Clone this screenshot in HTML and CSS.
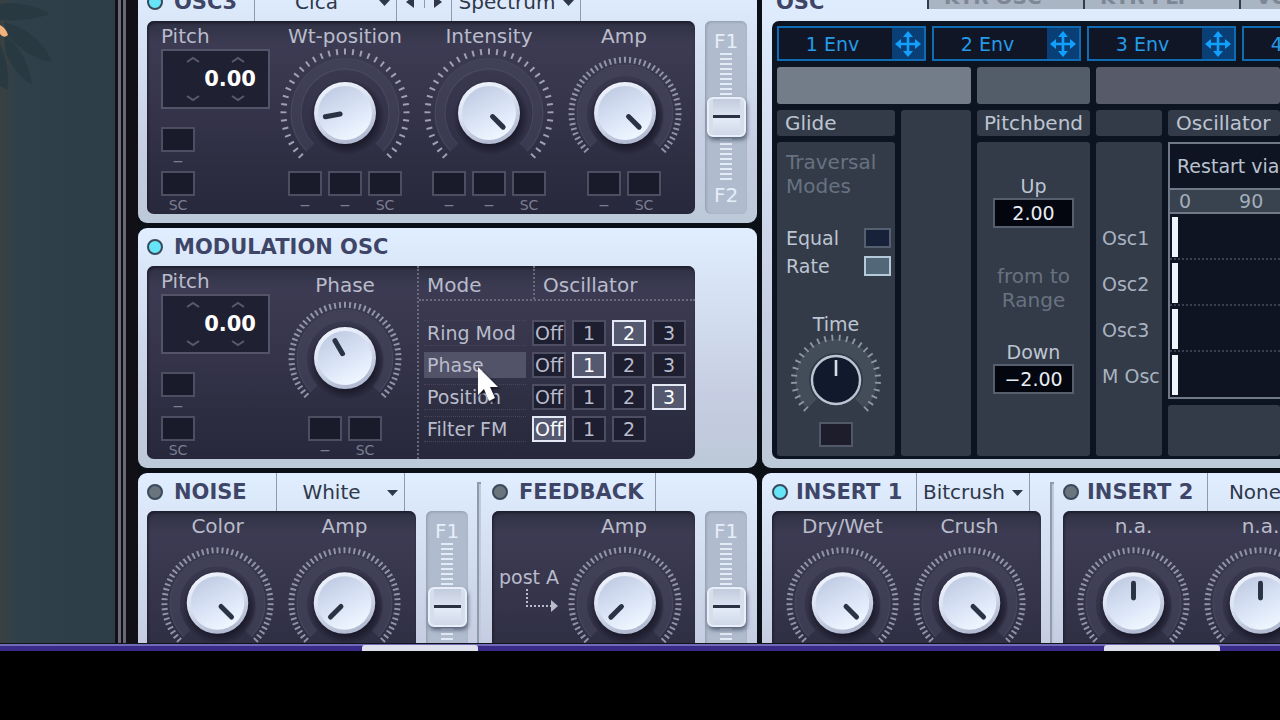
FILE: index.html
```html
<!DOCTYPE html>
<html lang="en">
<head>
<meta charset="utf-8">
<title>Synth</title>
<link rel="stylesheet" href="styles.css">
</head>
<body>
<svg class="defs" aria-hidden="true">
  <defs>
    <linearGradient id="rim" x1="0" y1="0" x2="0.4" y2="1"><stop offset="0" stop-color="#f4f8ff"/><stop offset="0.5" stop-color="#dbe2f2"/><stop offset="1" stop-color="#b3bcd2"/></linearGradient>
    <linearGradient id="dish" x1="0.1" y1="0" x2="0.6" y2="1"><stop offset="0" stop-color="#bcc8e0"/><stop offset="0.5" stop-color="#d6e0f4"/><stop offset="1" stop-color="#eef6ff"/></linearGradient>
    <radialGradient id="shade"><stop offset="0.7" stop-color="#10101e" stop-opacity="0.75"/><stop offset="1" stop-color="#10101e" stop-opacity="0"/></radialGradient>
    <g id="cap">
      <circle cx="2" cy="4" r="38" fill="url(#shade)"/>
      <circle r="31" fill="url(#rim)"/>
      <circle r="27" fill="url(#dish)"/>
    </g>
    <g id="dial-large" fill="none">
      <path d="M-35 35A49 49 0 1 1 35 35" stroke="#4b4b62" stroke-opacity="0.4" stroke-width="11"/>
      <path d="M-31 31A44 44 0 1 1 31 31" stroke="#5a5a72" stroke-opacity="0.4" stroke-width="1"/>
      <path d="M-38 38A54 54 0 1 1 38 38" stroke="#5a5a72" stroke-opacity="0.4" stroke-width="1"/>
      <path d="M-43.5 43.5A61.5 61.5 0 1 1 43.5 43.5" pathLength="145" stroke="#9fa1b3" stroke-width="6" stroke-dasharray="1 3"/>
    </g>
    <g id="dial-small" fill="none">
      <path d="M-31 31A43 43 0 1 1 31 31" stroke="#4b4b62" stroke-opacity="0.45" stroke-width="10"/>
      <path d="M-34 34A48 48 0 1 1 34 34" stroke="#5a5a72" stroke-opacity="0.4" stroke-width="1"/>
      <path d="M-38 38A53.5 53.5 0 1 1 38 38" pathLength="126" stroke="#9193a6" stroke-width="6" stroke-dasharray="1 1.5"/>
    </g>
    <path id="down" d="M0 0h11l-5.5 6z"/>
    <g id="move" fill="none" stroke="#12a0ff" stroke-width="2.6">
      <path d="M-9 0H9M0-9V9"/>
      <path d="M0-13L5-7H-5ZM0 13L5 7H-5ZM-13 0L-7-5V5ZM13 0L7-5V5Z" fill="#12a0ff" stroke="none"/>
    </g>
  </defs>
</svg>

<main class="workspace">
  <aside class="desk">
    <svg class="leaf" viewBox="0 0 60 110" aria-hidden="true">
      <g fill="#293942"><path d="M0 4Q24 0 50 14Q26 22 0 20Z"/><path d="M4 22Q38 30 52 62Q30 60 6 34Z"/><path d="M4 34Q28 54 32 84Q18 78 6 54Z"/><path d="M0 44Q10 64 8 90L0 86Z"/></g>
      <path d="M0 25Q6 28 8 35Q4 39 0 34Z" fill="#f3b27b"/>
    </svg>
  </aside>
  <div class="rails"><i></i><i></i></div>

  <div class="synth">
    <section class="panel">
      <div class="module">
        <header class="head">
          <div class="title w-osc"><i class="led on"></i><h2>OSC3</h2></div>
          <div class="pick w-wave"><select aria-label="Wavetable"><option>Cica</option></select><svg viewBox="0 0 11 6"><use href="#down"/></svg></div>
          <div class="stepper"><button aria-label="Previous"><svg viewBox="0 0 8 12"><path d="M8 0v12L0 6z"/></svg></button><button aria-label="Next"><svg viewBox="0 0 8 12"><path d="M0 0v12l8-6z"/></svg></button></div>
          <div class="pick w-type"><select aria-label="Type"><option>Spectrum</option></select><svg viewBox="0 0 11 6"><use href="#down"/></svg></div>
        </header>
        <div class="body">
          <div class="display strip">
            <div class="pitch">
              <label for="pitch3">Pitch</label>
              <div class="pitch-box">
                <div class="carets"><button aria-label="Up"><svg viewBox="0 0 14 7"><path d="M1 6l6-4 6 4"/></svg></button><button aria-label="Fine up"><svg viewBox="0 0 14 7"><path d="M1 6l6-4 6 4"/></svg></button></div>
                <input id="pitch3" value="0.00">
                <div class="carets"><button aria-label="Down"><svg viewBox="0 0 14 7"><path d="M1 1l6 4 6-4"/></svg></button><button aria-label="Fine down"><svg viewBox="0 0 14 7"><path d="M1 1l6 4 6-4"/></svg></button></div>
              </div>
              <div class="slot"><button aria-label="Modulation"></button><span>−</span></div>
              <div class="slot"><button aria-label="Sidechain"></button><span>SC</span></div>
            </div>
            <div class="cell">
              <label class="knob"><span>Wt-position</span><svg viewBox="-64 -64 128 122"><use href="#dial-large"/><use href="#cap"/><path class="hand" d="M0-5V-20" transform="rotate(-101)"/></svg><input type="range"></label>
              <div class="slots"><div class="slot"><button aria-label="Modulation 1"></button><span>−</span></div><div class="slot"><button aria-label="Modulation 2"></button><span>−</span></div><div class="slot"><button aria-label="Sidechain"></button><span>SC</span></div></div>
            </div>
            <div class="cell">
              <label class="knob"><span>Intensity</span><svg viewBox="-64 -64 128 122"><use href="#dial-large"/><use href="#cap"/><path class="hand" d="M0-5V-20" transform="rotate(135)"/></svg><input type="range"></label>
              <div class="slots"><div class="slot"><button aria-label="Modulation 1"></button><span>−</span></div><div class="slot"><button aria-label="Modulation 2"></button><span>−</span></div><div class="slot"><button aria-label="Sidechain"></button><span>SC</span></div></div>
            </div>
            <div class="cell">
              <label class="knob"><span>Amp</span><svg viewBox="-64 -64 128 122"><use href="#dial-small"/><use href="#cap"/><path class="hand" d="M0-5V-20" transform="rotate(135)"/></svg><input type="range"></label>
              <div class="slots"><div class="slot"><button aria-label="Modulation 1"></button><span>−</span></div><div class="slot"><button aria-label="Sidechain"></button><span>SC</span></div></div>
            </div>
          </div>
          <label class="fader"><span>F1</span><i class="scale"></i><span>F2</span><b class="thumb"></b><input type="range"></label>
        </div>
      </div>
    </section>

    <section class="panel">
      <div class="module">
        <header class="head"><div class="title"><i class="led on"></i><h2>MODULATION OSC</h2></div></header>
        <div class="body">
          <div class="display strip">
            <div class="pitch">
              <label for="pitchm">Pitch</label>
              <div class="pitch-box">
                <div class="carets"><button aria-label="Up"><svg viewBox="0 0 14 7"><path d="M1 6l6-4 6 4"/></svg></button><button aria-label="Fine up"><svg viewBox="0 0 14 7"><path d="M1 6l6-4 6 4"/></svg></button></div>
                <input id="pitchm" value="0.00">
                <div class="carets"><button aria-label="Down"><svg viewBox="0 0 14 7"><path d="M1 1l6 4 6-4"/></svg></button><button aria-label="Fine down"><svg viewBox="0 0 14 7"><path d="M1 1l6 4 6-4"/></svg></button></div>
              </div>
              <div class="slot"><button aria-label="Modulation"></button><span>−</span></div>
              <div class="slot"><button aria-label="Sidechain"></button><span>SC</span></div>
            </div>
            <div class="cell">
              <label class="knob knob-low"><span>Phase</span><svg viewBox="-64 -64 128 122"><use href="#dial-small"/><use href="#cap"/><path class="hand" d="M0-5V-20" transform="rotate(-30)"/></svg><input type="range"></label>
              <div class="slots"><div class="slot"><button aria-label="Modulation 1"></button><span>−</span></div><div class="slot"><button aria-label="Sidechain"></button><span>SC</span></div></div>
            </div>
            <div class="matrix">
              <div class="matrix-head"><span>Mode</span><span>Oscillator</span></div>
              <div class="matrix-row"><button class="mode">Ring Mod</button>
                <label><input type="radio" name="ring"><span>Off</span></label><label><input type="radio" name="ring"><span>1</span></label><label><input type="radio" name="ring" checked><span>2</span></label><label><input type="radio" name="ring"><span>3</span></label></div>
              <div class="matrix-row"><button class="mode active">Phase</button>
                <label><input type="radio" name="phase"><span>Off</span></label><label><input type="radio" name="phase" checked><span>1</span></label><label><input type="radio" name="phase"><span>2</span></label><label><input type="radio" name="phase"><span>3</span></label>
                <svg class="pointer" viewBox="-2 -2 26 40" aria-hidden="true"><path d="M0 0V28L6 22L11 34L17 31L12 20H20Z"/></svg></div>
              <div class="matrix-row"><button class="mode">Position</button>
                <label><input type="radio" name="pos"><span>Off</span></label><label><input type="radio" name="pos"><span>1</span></label><label><input type="radio" name="pos"><span>2</span></label><label><input type="radio" name="pos" checked><span>3</span></label></div>
              <div class="matrix-row"><button class="mode">Filter FM</button>
                <label><input type="radio" name="filter" checked><span>Off</span></label><label><input type="radio" name="filter"><span>1</span></label><label><input type="radio" name="filter"><span>2</span></label></div>
            </div>
          </div>
        </div>
      </div>
    </section>

    <section class="panel">
      <div class="module">
        <header class="head">
          <div class="title w-noise"><i class="led"></i><h2>NOISE</h2></div>
          <div class="pick w-noise"><select aria-label="Noise type"><option>White</option></select><svg viewBox="0 0 11 6"><use href="#down"/></svg></div>
        </header>
        <div class="body">
          <div class="display pair">
            <label class="knob"><span>Color</span><svg viewBox="-64 -64 128 122"><use href="#dial-small"/><use href="#cap"/><path class="hand" d="M0-5V-20" transform="rotate(135)"/></svg><input type="range"></label>
            <label class="knob"><span>Amp</span><svg viewBox="-64 -64 128 122"><use href="#dial-small"/><use href="#cap"/><path class="hand" d="M0-5V-20" transform="rotate(-135)"/></svg><input type="range"></label>
          </div>
          <label class="fader"><span>F1</span><i class="scale"></i><b class="thumb"></b><input type="range"></label>
        </div>
      </div>
      <div class="groove"></div>
      <div class="module">
        <header class="head"><div class="title w-feedback"><i class="led"></i><h2>FEEDBACK</h2></div></header>
        <div class="body">
          <div class="display feedback">
            <div class="route"><span>post A</span><svg viewBox="0 0 34 24" aria-hidden="true"><path d="M2 0V17H26" fill="none" stroke="#b9bccb" stroke-width="2" stroke-dasharray="2 2"/><path d="M26 11L33 17L26 23Z" fill="#b9bccb"/></svg></div>
            <label class="knob"><span>Amp</span><svg viewBox="-64 -64 128 122"><use href="#dial-small"/><use href="#cap"/><path class="hand" d="M0-5V-20" transform="rotate(-135)"/></svg><input type="range"></label>
          </div>
          <label class="fader"><span>F1</span><i class="scale"></i><b class="thumb"></b><input type="range"></label>
        </div>
      </div>
    </section>
  </div>

  <div class="synth side">
    <section class="panel panel-tall">
      <header class="head">
        <div class="title tab-title"><h2>OSC</h2></div>
        <nav class="tabs"><button>KTR OSC</button><button>KTR FLT</button><button>VOICING</button></nav>
      </header>
      <div class="deck">
        <div class="envs">
          <div class="env"><button>1 Env</button><button class="drag" aria-label="Assign 1"><svg viewBox="-14 -14 28 28"><use href="#move"/></svg></button></div>
          <div class="env"><button>2 Env</button><button class="drag" aria-label="Assign 2"><svg viewBox="-14 -14 28 28"><use href="#move"/></svg></button></div>
          <div class="env"><button>3 Env</button><button class="drag" aria-label="Assign 3"><svg viewBox="-14 -14 28 28"><use href="#move"/></svg></button></div>
          <div class="env"><button>4 Env</button><button class="drag" aria-label="Assign 4"><svg viewBox="-14 -14 28 28"><use href="#move"/></svg></button></div>
        </div>
        <div class="board">
          <div class="tile band band-a"></div><div class="tile band band-b"></div><div class="tile band band-c"></div>
          <h3 class="tile">Glide</h3>
          <div class="tile blank"></div>
          <h3 class="tile centred">Pitchbend</h3>
          <div class="tile"></div>
          <h3 class="tile">Oscillator</h3>

          <div class="tile glide">
            <p class="dim">Traversal<br>Modes</p>
            <label class="check">Equal<input type="checkbox"></label>
            <label class="check">Rate<input type="checkbox" checked></label>
            <label class="knob time"><span>Time</span>
              <svg viewBox="-48 -43 96 85"><path d="M-24 24A34 34 0 1 1 24 24" fill="none" stroke="#434d5a" stroke-width="14"/><path d="M-29.5 29.5A42 42 0 1 1 29.5 29.5" pathLength="109" fill="none" stroke="#8d97a4" stroke-width="6" stroke-dasharray="1 3"/><circle r="24" fill="#101a2c" stroke="#bcc5d2" stroke-width="2.4"/><path d="M0-4V-20" stroke="#d5dce6" stroke-width="2.6"/></svg>
              <input type="range"></label>
            <div class="slot"><button aria-label="Time modulation"></button></div>
          </div>
          <div class="tile bend">
            <label for="up">Up</label><input id="up" value="2.00">
            <p class="dim">from to<br>Range</p>
            <label for="dn">Down</label><input id="dn" value="−2.00">
          </div>
          <div class="tile names"><span>Osc1</span><span>Osc2</span><span>Osc3</span><span>M Osc</span></div>
          <div class="phases">
            <div class="phase-box">
              <div class="restart">Restart via</div>
              <div class="ruler"><span>0</span><span>90</span></div>
              <div class="lane"><i></i></div><div class="lane"><i></i></div><div class="lane"><i></i></div><div class="lane"><i></i></div>
            </div>
            <div class="tile rest"></div>
          </div>
        </div>
      </div>
    </section>

    <section class="panel panel-inserts">
      <div class="module">
        <header class="head">
          <div class="title w-insert"><i class="led on"></i><h2>INSERT 1</h2></div>
          <div class="pick w-effect"><select aria-label="Insert 1 effect"><option>Bitcrush</option></select><svg viewBox="0 0 11 6"><use href="#down"/></svg></div>
        </header>
        <div class="body">
          <div class="display pair">
            <label class="knob"><span>Dry/Wet</span><svg viewBox="-64 -64 128 122"><use href="#dial-small"/><use href="#cap"/><path class="hand" d="M0-5V-20" transform="rotate(135)"/></svg><input type="range"></label>
            <label class="knob"><span>Crush</span><svg viewBox="-64 -64 128 122"><use href="#dial-small"/><use href="#cap"/><path class="hand" d="M0-5V-20" transform="rotate(135)"/></svg><input type="range"></label>
          </div>
        </div>
      </div>
      <div class="groove"></div>
      <div class="module">
        <header class="head">
          <div class="title w-insert"><i class="led"></i><h2>INSERT 2</h2></div>
          <div class="pick w-effect"><select aria-label="Insert 2 effect"><option>None</option></select><svg viewBox="0 0 11 6"><use href="#down"/></svg></div>
        </header>
        <div class="body">
          <div class="display pair">
            <label class="knob"><span>n.a.</span><svg viewBox="-64 -64 128 122"><use href="#dial-small"/><use href="#cap"/><path class="hand" d="M0-5V-20"/></svg><input type="range"></label>
            <label class="knob"><span>n.a.</span><svg viewBox="-64 -64 128 122"><use href="#dial-small"/><use href="#cap"/><path class="hand" d="M0-5V-20"/></svg><input type="range"></label>
          </div>
        </div>
      </div>
    </section>
  </div>
</main>
<footer class="dock"><i></i><i></i></footer>
</body>
</html>
```

FILE: styles.css
```css
* { box-sizing: border-box; }

body {
  margin: 0;
  height: 100vh;
  padding-bottom: 69px;
  display: flex;
  flex-direction: column;
  overflow: hidden;
  background: #000;
  font: 20px/24px "DejaVu Sans", Verdana, sans-serif;
  color: #b9bccb;
}

button, input, select { font: inherit; color: inherit; margin: 0; padding: 0; border: 0; background: none; border-radius: 0; }
h2, h3, p { margin: 0; font: inherit; }
svg { display: block; }
.defs { position: absolute; width: 0; height: 0; }

.workspace {
  flex: 1;
  min-height: 0;
  overflow: hidden;
  display: grid;
  grid-template-columns: 115px 23px 619px minmax(0, 1fr);
  background: #0b0f16;
}

.desk { background: linear-gradient(90deg, #3a4140, #30404a 14%, #2d3d47); }
.leaf { width: 60px; height: 110px; }
.rails { display: flex; gap: 2px; padding-left: 3px; background: #101016; }
.rails i { width: 3px; background: #6a6877; }

/* The rack is scrolled so that the first row starts above the window. */
.synth { margin-top: -17px; display: flex; flex-direction: column; gap: 5px; }
.side { padding-left: 5px; }

.panel {
  flex: none;
  display: flex;
  height: 240px;
  padding: 0 9px 9px;
  border-radius: 9px;
  background: linear-gradient(#e0eeff, #d3def0 35%, #c6cde2 70%, #bcc9d8);
}
.panel-tall { display: block; height: 485px; padding: 0 0 9px 10px; border-radius: 9px 0 0 9px; }
.panel-inserts { padding-left: 10px; overflow: hidden; border-radius: 9px 0 0 9px; }

.head { display: flex; height: 38px; }
.title { display: flex; align-items: center; gap: 11px; color: #3f4567; }
.title h2 { font-size: 21px; font-weight: bold; white-space: nowrap; }
.led { width: 16px; height: 16px; border: 2px solid #3a4a5c; border-radius: 50%; background: #69747c; }
.led.on { background: #66e4f8; }

.w-osc { width: 107px; }
.w-wave { width: 143px; }
.w-type { width: 130px; }
.w-noise { width: 129px; }
.w-feedback { width: 164px; border-right: 1px solid #8f9bad; }
.w-insert { width: 144px; }
.panel-inserts .title { gap: 8px; }
.w-effect { width: 114px; }

.pick { position: relative; border: solid #8f9bad; border-width: 0 1px; }
.pick select { appearance: none; width: 100%; height: 100%; padding-right: 18px; text-align-last: center; color: #2f384a; }
.pick svg { position: absolute; right: 6px; top: 17px; width: 11px; height: 6px; fill: #2f384a; pointer-events: none; }

.stepper { display: flex; align-items: center; width: 54px; }
.stepper button { flex: 1; display: flex; justify-content: center; }
.stepper button + button { border-left: 1px solid #8f9bad; }
.stepper svg { width: 8px; height: 12px; fill: #2f384a; }

.body { display: flex; gap: 10px; }
.display {
  min-height: 193px;
  border-radius: 7px;
  background: linear-gradient(#303144, #3c3b53 12%, #343349 50%, #27283b);
  box-shadow: inset 1px 2px 3px #1c1d2c;
}
.strip { display: grid; width: 548px; grid-template-columns: 126px 144px 144px 126px; }
.pair { display: flex; padding-left: 7px; width: 269px; }
.pair .knob { width: 127px; }
.feedback { display: flex; width: 203px; }
.feedback .knob { width: 126px; }
.route { width: 69px; padding: 54px 0 0 7px; white-space: nowrap; }
.route span { font-size: 19px; }
.route svg { width: 34px; height: 24px; margin-left: 26px; }

.knob { position: relative; display: block; text-align: center; }
.knob span { display: block; height: 28px; padding-top: 2px; line-height: 26px; white-space: nowrap; }
.knob-low span { padding-top: 10px; line-height: 18px; }
.knob svg { width: 128px; height: 122px; margin: 0 auto; overflow: visible; }
.knob input { position: absolute; left: 25%; top: 60px; width: 50%; height: 64px; opacity: 0; }
.pair .knob svg { width: 127px; }
.strip .knob, .feedback .knob { display: flex; flex-direction: column; align-items: center; }
.strip .knob svg, .feedback .knob svg { flex: none; }
.hand { stroke: #2a3344; stroke-width: 5; stroke-linecap: round; }

.slots { display: flex; justify-content: center; gap: 6px; }
.slot { display: flex; flex-direction: column; align-items: center; width: 34px; }
.slot button { width: 34px; height: 25px; border: 2px solid #4d4e61; background: #191a2a; }
.slot span { font-size: 14px; line-height: 18px; color: #7c7d91; }

.pitch { padding-left: 14px; }
.pitch > label { display: block; height: 28px; padding-top: 2px; line-height: 26px; }
.pitch-box { width: 109px; height: 60px; margin-bottom: 18px; border: 2px solid #535468; background: #1f2031; }
.pitch-box input { display: block; width: 100%; height: 22px; padding-right: 12px; text-align: right; font-size: 21px; font-weight: bold; color: #fff; }
.carets { display: flex; gap: 25px; height: 17px; padding-left: 20px; }
.carets button { width: 20px; display: flex; align-items: center; justify-content: center; }
.carets svg { width: 14px; height: 7px; fill: none; stroke: #595a6d; stroke-width: 2; }
.pitch .slot + .slot { margin-top: 1px; }

.fader {
  position: relative;
  display: flex;
  flex-direction: column;
  align-items: center;
  width: 42px;
  height: 193px;
  padding: 8px 0 7px;
  border-radius: 6px;
  background: #b0bccd;
  box-shadow: inset 1px 1px 3px #8e9aae;
  color: #e6eefa;
}
.fader .scale { flex: 1; width: 12px; background: repeating-linear-gradient(#e3ebf7 0 2px, transparent 2px 5px); }
.fader .thumb {
  position: absolute;
  left: 2px;
  top: 76px;
  width: 39px;
  height: 40px;
  border-radius: 6px;
  border: 2px solid #e8eefa;
  background: linear-gradient(#c2cbdc, #dbe3f1 45%, #2a3344 45%, #2a3344 52%, #e4ecf8 52%, #cfd8e8) center / 27px 100% no-repeat #d6deec;
  box-shadow: 1px 3px 4px #59647a;
}
.fader input { position: absolute; inset: 0; width: 100%; height: 100%; opacity: 0; }

.groove { align-self: stretch; flex: none; width: 4px; margin: 9px 11px 0 9px; border-left: 2px solid #8f9aac; border-top: 2px solid #8f9aac; background: #c0cadb; }
.panel-inserts .groove { margin-right: 9px; }

.matrix { grid-column: 3 / 5; width: 278px; border-left: 2px dotted #68697d; white-space: nowrap; }
.matrix-head { display: grid; grid-template-columns: 114px 1fr; height: 35px; margin-bottom: 19px; border-bottom: 2px dotted #68697d; line-height: 38px; }
.matrix-head span { height: 33px; padding-left: 8px; }
.matrix-head span + span { border-left: 2px dotted #68697d; }
.matrix-row { position: relative; display: flex; gap: 6px; height: 26px; margin-bottom: 6px; padding-left: 5px; font-size: 19px; line-height: 22px; }
.mode { width: 102px; padding-left: 3px; text-align: left; border: 1px dotted #47475c; border-width: 1px 0; }
.mode.active { border-color: #525268; background: #525268; }
.matrix-row label { position: relative; width: 34px; }
.matrix-row input { position: absolute; inset: 0; width: 100%; height: 100%; opacity: 0; }
.matrix-row label span { display: block; width: 34px; height: 26px; border: 2px solid #4d4e61; background: #1d1e2f; text-align: center; }
.matrix-row input:checked + span { border-color: #e3e8f4; background: #55596f; color: #fff; }
.pointer { position: absolute; left: 57px; top: 13px; width: 26px; height: 40px; fill: #fff; filter: drop-shadow(2px 2px 1px #15151f); z-index: 1; }

.tab-title { width: 155px; padding-left: 4px; }
.tabs { flex: 1; display: flex; height: 26px; overflow: hidden; background: #aab5c4; }
.tabs button { flex: none; width: 156px; height: 26px; padding: 2px 0 0 15px; line-height: 24px; text-align: left; border-left: 2px solid #343c4c; font-weight: bold; color: #7d8795; }

.deck { height: 438px; padding: 5px 0 3px 5px; border-radius: 7px 0 0 7px; background: #0c1421; overflow: hidden; }
.envs { display: flex; gap: 6px; height: 35px; margin-bottom: 6px; }
.env { flex: none; display: flex; width: 149px; border: 2px solid #0f6cb4; background: #111626; color: #249be9; font-size: 19px; }
.env button { flex: 1; padding-right: 6px; }
.env .drag { flex: none; width: 32px; padding: 0; background: #0a3f75; }
.drag svg { width: 28px; height: 28px; margin: 0 auto; }

.board { display: grid; grid-template: 37px 26px 314px / 118px 70px 113px 66px minmax(0, 1fr); gap: 6px; }
.tile { border-radius: 3px; background: #333b48; color: #bdc5d2; }
h3.tile { padding-left: 8px; line-height: 26px; white-space: nowrap; }
h3.centred { padding: 0; text-align: center; }
.band-a { grid-column: 1 / 3; background: #727d89; }
.band-b { background: #535c69; }
.band-c { grid-column: 4 / 6; background: #575a69; }
.blank { grid-area: 2 / 2 / 4 / 3; }
.dim { color: #687280; }

.glide { grid-column: 1; padding-top: 8px; }
.glide .dim { padding-left: 9px; margin-bottom: 26px; }
.check { display: flex; align-items: center; justify-content: space-between; height: 28px; padding: 0 4px 0 9px; font-size: 19px; }
.check input { appearance: none; width: 27px; height: 20px; border: 2px solid #545f6f; background: #17213a; }
.check input:checked { border-color: #b4c9d9; background: #526879; }
.time { margin-top: 31px; font-size: 19px; }
.time span { height: 26px; padding: 0; }
.time svg { width: 96px; height: 85px; }
.glide .slot { margin: 0 auto; }
.glide .slot button { border-color: #515867; background: #1d1d2b; }

.bend { grid-column: 3; padding-top: 32px; text-align: center; }
.bend label { display: block; font-size: 19px; }
.bend input { width: 81px; height: 30px; border: 2px solid #565f6d; background: #04060f; color: #e8edf5; text-align: center; display: block; margin: 0 auto; font-size: 19px; }
.bend .dim { margin: 36px 0 28px; }

.names { padding: 73px 0 0 6px; color: #a9b2c0; white-space: nowrap; font-size: 19px; }
.names span { display: block; line-height: 46px; }

.phases { display: flex; flex-direction: column; gap: 6px; white-space: nowrap; font-size: 19px; }
.phase-box { border: 2px solid #6f7987; border-right: 0; background: #0e1422; color: #b9c2cf; overflow: hidden; }
.restart { padding-left: 7px; line-height: 44px; }
.ruler { display: flex; gap: 48px; height: 26px; padding-left: 9px; border: solid #6f7987; border-width: 2px 0; background: #39424f; line-height: 22px; color: #a3adba; }
.lane { height: 46px; padding: 3px 2px; border-bottom: 2px dotted #38404d; }
.lane:last-child { border-bottom: 0; height: 45px; }
.lane i { display: block; width: 6px; height: 40px; background: #eef4fc; }
.rest { flex: 1; }

.dock {
  flex: none;
  display: flex;
  justify-content: space-between;
  height: 8px;
  padding: 2px 60px 0 362px;
  background: linear-gradient(#14141c 0 1px, #6f6bb5 1px 3px, #3a2b88 3px);
}
.dock i { width: 116px; border-radius: 3px 3px 0 0; background: #dfe1ec; }
```
